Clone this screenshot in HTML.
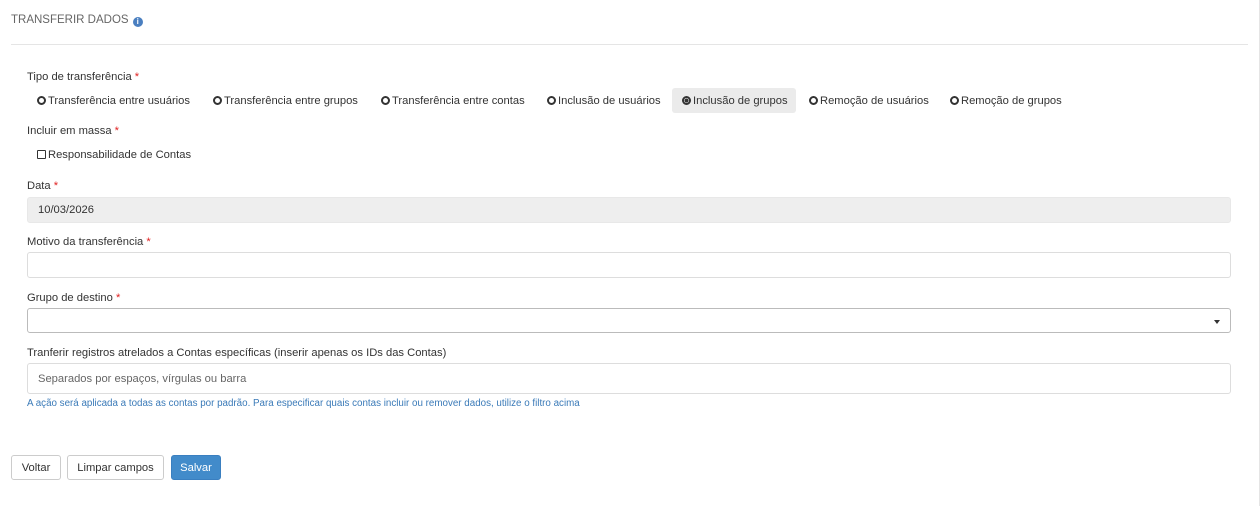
<!DOCTYPE html>
<html><head><meta charset="utf-8"><style>
*{box-sizing:border-box;margin:0;padding:0}
body{width:1260px;height:506px;background:#fff;font-family:"Liberation Sans",sans-serif;font-size:11.2px;color:#333;position:relative;overflow:hidden}
.a{position:absolute;white-space:nowrap}
.rb{position:absolute;border-right:1px solid #e5e5e5;left:1258px;top:0;height:506px;width:2px}
.hr{position:absolute;left:11px;width:1237px;top:44px;border-top:1px solid #e5e5e5}
.req{color:#e02020}
.r{display:inline-block;width:9px;height:9px;border:2px solid #333;border-radius:50%;vertical-align:-1px;margin-right:2px}
.r.on{background:radial-gradient(circle at center,#333 0,#333 1.8px,#fff 2.2px)}
.cb{display:inline-block;width:9px;height:9px;border:1px solid #333;border-radius:1px;vertical-align:-1px;margin-right:2px}
.in{position:absolute;left:27px;width:1204px;border:1px solid #ddd;border-radius:3px;padding-left:10px;line-height:24px}
.btn{position:absolute;top:455px;height:25px;border:1px solid #ccc;border-radius:3px;text-align:center;line-height:24px;color:#333;background:#fff}
</style></head><body>
<div class="rb"></div>
<div class="a" style="left:11px;top:14px;font-size:11.5px;color:#666">TRANSFERIR DADOS <span style="display:inline-block;width:10px;height:10px;border-radius:50%;background:#4a7fc0;color:#fff;font-size:8px;line-height:10px;text-align:center;font-weight:bold;vertical-align:-1px;margin-left:1px">i</span></div>
<div class="hr"></div>
<div class="a" style="left:27px;top:71px">Tipo de transferência <span class="req">*</span></div>
<div class="a" style="left:672px;top:88px;width:124px;height:25px;background:#ebebeb;border-radius:3px"></div>
<div class="a" style="left:37px;top:95px"><span class="r"></span>Transferência entre usuários</div>
<div class="a" style="left:213px;top:95px"><span class="r"></span>Transferência entre grupos</div>
<div class="a" style="left:381px;top:95px"><span class="r"></span>Transferência entre contas</div>
<div class="a" style="left:547px;top:95px"><span class="r"></span>Inclusão de usuários</div>
<div class="a" style="left:682px;top:95px"><span class="r on"></span>Inclusão de grupos</div>
<div class="a" style="left:809px;top:95px"><span class="r"></span>Remoção de usuários</div>
<div class="a" style="left:950px;top:95px"><span class="r"></span>Remoção de grupos</div>
<div class="a" style="left:27px;top:125px">Incluir em massa <span class="req">*</span></div>
<div class="a" style="left:37px;top:149px"><span class="cb"></span>Responsabilidade de Contas</div>
<div class="a" style="left:27px;top:180px">Data <span class="req">*</span></div>
<div class="in" style="top:197px;height:26px;background:#eee;border-color:#e8e8e8;line-height:25px">10/03/2026</div>
<div class="a" style="left:27px;top:236px">Motivo da transferência <span class="req">*</span></div>
<div class="in" style="top:252px;height:26px"></div>
<div class="a" style="left:27px;top:292px">Grupo de destino <span class="req">*</span></div>
<div class="in" style="top:308px;height:25px;border-color:#bbb"><span style="position:absolute;right:10px;top:11px;border-left:3px solid transparent;border-right:3px solid transparent;border-top:4px solid #333"></span></div>
<div class="a" style="left:27px;top:347px">Tranferir registros atrelados a Contas específicas (inserir apenas os IDs das Contas)</div>
<div class="in" style="top:363px;height:31px;line-height:30px;color:#666">Separados por espaços, vírgulas ou barra</div>
<div class="a" style="left:27px;top:398px;font-size:9.8px;color:#3a7ab8">A ação será aplicada a todas as contas por padrão. Para especificar quais contas incluir ou remover dados, utilize o filtro acima</div>
<div class="btn" style="left:11px;width:50px">Voltar</div>
<div class="btn" style="left:67px;width:97px">Limpar campos</div>
<div class="btn" style="left:171px;width:50px;background:#428bca;border-color:#3a7fc0;color:#fff">Salvar</div>
</body></html>
